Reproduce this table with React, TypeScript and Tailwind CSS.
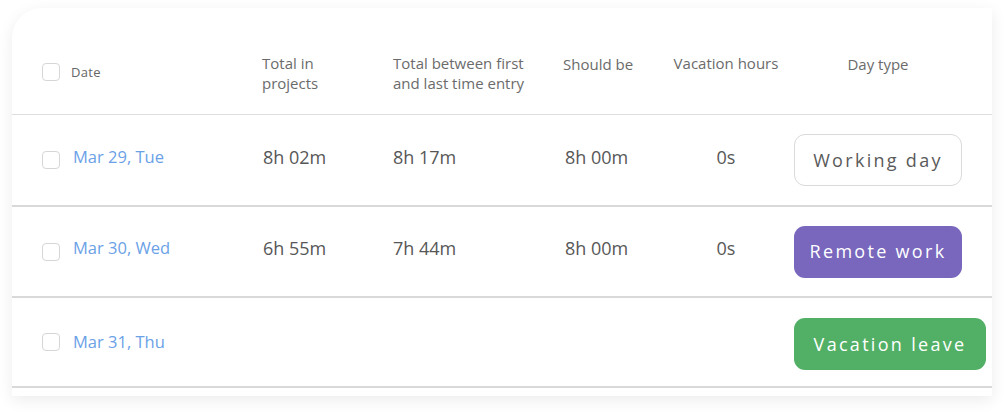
import React from 'react';

interface DayRow {
  date: string;
  inProjects?: string;
  between?: string;
  shouldBe?: string;
  vacation?: string;
  type: 'working' | 'remote' | 'vacation';
  height: string;
  textPad: string;
  buttonPad: string;
}

const rows: DayRow[] = [
  { date: 'Mar 29, Tue', inProjects: '8h 02m', between: '8h 17m', shouldBe: '8h 00m', vacation: '0s', type: 'working', height: 'h-[92px]', textPad: 'pb-[6px]', buttonPad: 'pt-0' },
  { date: 'Mar 30, Wed', inProjects: '6h 55m', between: '7h 44m', shouldBe: '8h 00m', vacation: '0s', type: 'remote', height: 'h-[91px]', textPad: 'pb-[6px]', buttonPad: 'pt-0' },
  { date: 'Mar 31, Thu', type: 'vacation', height: 'h-[90px]', textPad: 'pb-0', buttonPad: 'pt-[4px]' },
];

const Checkbox: React.FC = () => (
  <span className="block w-[18px] h-[18px] shrink-0 rounded-[4px] border border-[#d6d6d6] bg-white" />
);

const DayTypeButton: React.FC<{ type: DayRow['type'] }> = ({ type }) => {
  if (type === 'working') {
    return (
      <button className="h-[52px] w-[168px] rounded-[11px] border border-[#dadada] bg-white text-[18px] tracking-[2.3px] text-[#5a5a5a]">
        Working day
      </button>
    );
  }
  if (type === 'remote') {
    return (
      <button className="h-[52px] w-[168px] rounded-[11px] bg-[#7867bd] text-[18px] tracking-[2.3px] text-white">
        Remote work
      </button>
    );
  }
  return (
    <button className="h-[52px] w-[192px] rounded-[11px] bg-[#52b066] text-[18px] tracking-[2.3px] text-white">
      Vacation leave
    </button>
  );
};

const App: React.FC = () => {
  return (
    <div className="w-[1004px] h-[412px] bg-white pt-[8px] pl-[12px] font-['Open_Sans',sans-serif]">
      <div className="w-[980px] rounded-tl-[30px] bg-white pb-[8px] shadow-[0_4px_16px_rgba(0,0,0,0.08)]">
        {/* Header */}
        <div className="grid h-[107px] grid-cols-[220px_131px_170px_103px_120px_1fr] items-start border-b border-[#dedede] pl-[30px] pt-[45px] text-[15px] leading-[20px] text-[#6b6b6b]">
          <div className="mt-[9px] flex items-center gap-[11px]">
            <Checkbox />
            <span className="text-[13px] tracking-[0.3px] text-[#666]">Date</span>
          </div>
          <div>
            Total in
            <br />
            projects
          </div>
          <div>
            Total between first
            <br />
            and last time entry
          </div>
          <div className="pt-[1px]">Should be</div>
          <div className="text-center">Vacation hours</div>
          <div className="pl-[8px]">
            <div className="w-[168px] pt-[1px] text-center">Day type</div>
          </div>
        </div>

        {/* Rows */}
        {rows.map((row) => (
          <div
            key={row.date}
            className={`grid ${row.height} grid-cols-[220px_131px_170px_103px_120px_1fr] items-center border-b-2 border-[#d9d9d9] pl-[30px] text-[18px] text-[#575757]`}
          >
            <div className="flex items-center gap-[13px]">
              <Checkbox />
              <span className={`${row.textPad} text-[16.5px] text-[#6ba1e7]`}>{row.date}</span>
            </div>
            <div className={`${row.textPad} pl-[1px]`}>{row.inProjects}</div>
            <div className={row.textPad}>{row.between}</div>
            <div className={`${row.textPad} pl-[2px]`}>{row.shouldBe}</div>
            <div className={`${row.textPad} text-center`}>{row.vacation}</div>
            <div className={`${row.buttonPad} pl-[8px]`}>
              <DayTypeButton type={row.type} />
            </div>
          </div>
        ))}
      </div>
    </div>
  );
};

export default App;
